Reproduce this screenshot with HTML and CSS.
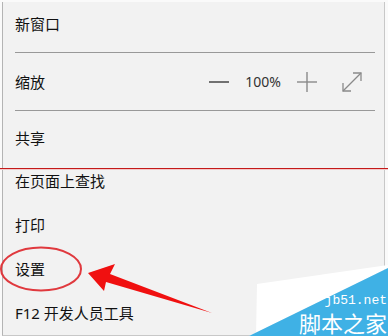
FILE: index.html
```html
<!DOCTYPE html>
<html lang="zh-CN">
<head>
    <meta charset="UTF-8">
    <meta name="viewport" content="width=device-width, initial-scale=1.0">
    <title>设置菜单</title>
    <link rel="stylesheet" href="styles.css">
</head>
<body>
    <div class="page">
        <div class="menu">
            <div class="item first"><span>新窗口</span></div>
            <div class="sep"></div>
            <div class="item zoom-row">
                <span>缩放</span>
                <div class="zoom-controls">
                    <svg class="zoom-icon minus" width="20" height="20" viewBox="0 0 20 20">
                        <line x1="0" y1="10" x2="20" y2="10" stroke="#505050" stroke-width="1.6"/>
                    </svg>
                    <span class="zoom-value">100%</span>
                    <svg class="zoom-icon plus" width="20" height="20" viewBox="0 0 20 20">
                        <line x1="0" y1="10" x2="20" y2="10" stroke="#8a8a8a" stroke-width="1.4"/>
                        <line x1="10" y1="0" x2="10" y2="20" stroke="#8a8a8a" stroke-width="1.4"/>
                    </svg>
                    <svg class="zoom-icon full" width="20" height="20" viewBox="0 0 20 20">
                        <g stroke="#8a8a8a" stroke-width="1.3" fill="none">
                            <line x1="1" y1="19" x2="19" y2="1"/>
                            <polyline points="1,11 1,19 9,19"/>
                            <polyline points="11,1 19,1 19,9"/>
                        </g>
                    </svg>
                </div>
            </div>
            <div class="sep second"></div>
            <div class="item share"><span>共享</span></div>
            <div class="item"><span>在页面上查找</span></div>
            <div class="item"><span>打印</span></div>
            <div class="item"><span>设置</span></div>
            <div class="item"><span>F12 开发人员工具</span></div>
        </div>

        <!-- seam line and annotations drawn over the menu -->
        <div class="seam"></div>
        <svg class="marks" width="388" height="336" viewBox="0 0 388 336">
            <ellipse cx="41" cy="269" rx="40" ry="21.5" fill="none" stroke="#e0393e" stroke-width="2"/>
            <polygon points="88,273 115,264 110,274 212,313 106,282 104,291" fill="#f01010"/>
            <polygon points="257,284 388,265 388,268 249,336 256,336" fill="#ffffff"/>
            <polygon points="249,336 388,268 388,336" fill="#3fb1e5"/>
        </svg>
        <div class="brand">
            <div class="brand-url">jb51.net</div>
            <div class="brand-name">脚本之家</div>
        </div>
    </div>
</body>
</html>
```

FILE: styles.css
```css
body {
    margin: 0;
    padding: 0;
    background-color: #fafafa;
    font-family: "Noto Sans", "Noto Sans CJK SC", sans-serif;
    color: #111;
}
.page {
    position: relative;
    width: 388px;
    height: 336px;
    overflow: hidden;
}
.menu {
    margin-left: 2px;
    width: 381px;
    height: 333px;
    background-color: #f2f2f2;
    border-left: 1px solid #b4b4b4;
    border-right: 1px solid #c8c8c8;
    border-bottom: 1px solid #c8c8c8;
}
.item {
    height: 44px;
    line-height: 44px;
    padding-left: 12px;
    font-size: 15px;
}
.item.first {
    margin-top: 2px;
}
.sep {
    height: 1px;
    margin: 6px 9px 7px 12px;
    background-color: #999;
}
.sep.second {
    margin-bottom: 5px;
}
.item.share {
    margin-bottom: -1px;
}
.zoom-row {
    display: flex;
    align-items: center;
    padding-right: 22px;
}
.zoom-controls {
    margin-left: auto;
    display: flex;
    align-items: center;
}
.zoom-icon {
    display: block;
}
.zoom-value {
    width: 36px;
    margin: 0 16px;
    text-align: center;
    font-size: 14px;
    color: #333;
}
.zoom-icon.full {
    margin-left: 25px;
}
.seam {
    position: absolute;
    left: 0;
    top: 168px;
    width: 388px;
    height: 1px;
    background-color: #c41a1a;
    box-shadow: 0 1px 0 #f3c9c9;
}
.marks {
    position: absolute;
    left: 0;
    top: 0;
}
.brand {
    position: absolute;
    right: 1px;
    bottom: 0;
    color: #fff;
    text-align: right;
}
.brand-url {
    font-family: "Liberation Mono", monospace;
    font-size: 13px;
    line-height: 14px;
}
.brand-name {
    font-family: "Noto Sans CJK SC", sans-serif;
    font-size: 22px;
    line-height: 28px;
}
```
